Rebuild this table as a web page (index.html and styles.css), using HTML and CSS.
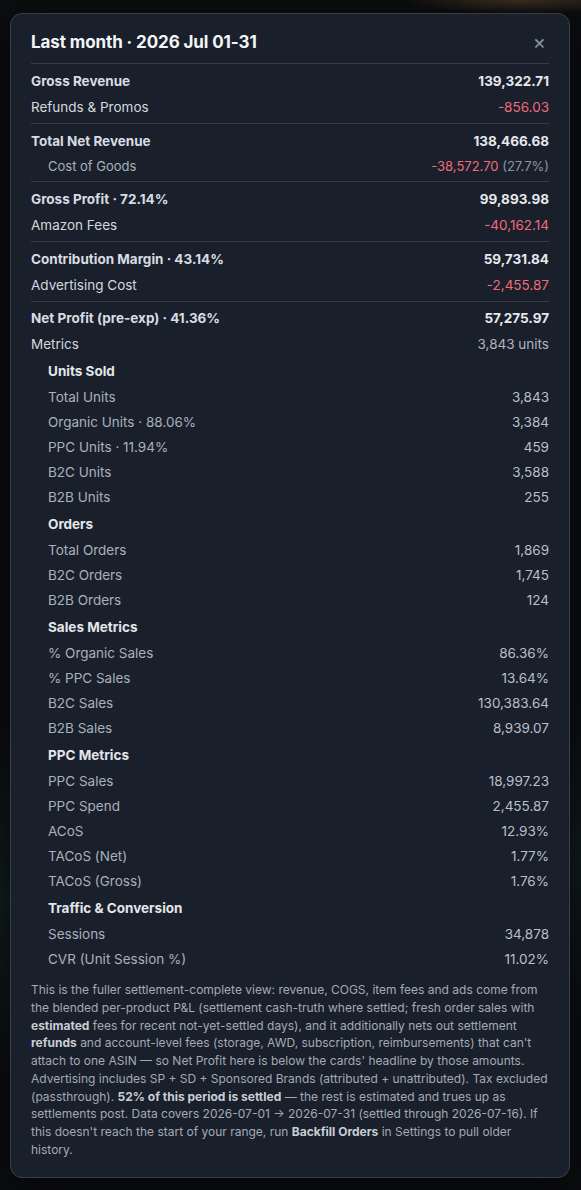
FILE: index.html
```html
<!DOCTYPE html>
<html lang="en">
<head>
    <meta charset="UTF-8">
    <meta name="viewport" content="width=device-width, initial-scale=1.0">
    <title>Period P&amp;L</title>
    <link rel="stylesheet" href="styles.css">
</head>
<body>
    <div class="modal">
        <div class="modal-head">
            <h2>Last month · 2026 Jul 01-31</h2>
            <span class="close-btn">&times;</span>
        </div>

        <div class="sect">
            <div class="row major"><span>Gross Revenue</span><span class="val">139,322.71</span></div>
            <div class="row"><span>Refunds &amp; Promos</span><span class="val neg">-856.03</span></div>
        </div>
        <div class="sect">
            <div class="row major"><span>Total Net Revenue</span><span class="val">138,466.68</span></div>
            <div class="row sub small"><span>Cost of Goods</span><span class="val"><span class="neg">-38,572.70</span> <span class="pct">(27.7%)</span></span></div>
        </div>
        <div class="sect">
            <div class="row major"><span>Gross Profit · 72.14%</span><span class="val">99,893.98</span></div>
            <div class="row"><span>Amazon Fees</span><span class="val neg">-40,162.14</span></div>
        </div>
        <div class="sect">
            <div class="row major"><span>Contribution Margin · 43.14%</span><span class="val">59,731.84</span></div>
            <div class="row"><span>Advertising Cost</span><span class="val neg">-2,455.87</span></div>
        </div>
        <div class="sect last">
            <div class="row major"><span>Net Profit (pre-exp) · 41.36%</span><span class="val">57,275.97</span></div>
            <div class="row"><span>Metrics</span><span class="val muted">3,843 units</span></div>

            <div class="metrics">
                <div class="group-title">Units Sold</div>
                <div class="row sub"><span>Total Units</span><span class="val">3,843</span></div>
                <div class="row sub"><span>Organic Units · 88.06%</span><span class="val">3,384</span></div>
                <div class="row sub"><span>PPC Units · 11.94%</span><span class="val">459</span></div>
                <div class="row sub"><span>B2C Units</span><span class="val">3,588</span></div>
                <div class="row sub"><span>B2B Units</span><span class="val">255</span></div>

                <div class="group-title">Orders</div>
                <div class="row sub"><span>Total Orders</span><span class="val">1,869</span></div>
                <div class="row sub"><span>B2C Orders</span><span class="val">1,745</span></div>
                <div class="row sub"><span>B2B Orders</span><span class="val">124</span></div>

                <div class="group-title">Sales Metrics</div>
                <div class="row sub"><span>% Organic Sales</span><span class="val">86.36%</span></div>
                <div class="row sub"><span>% PPC Sales</span><span class="val">13.64%</span></div>
                <div class="row sub"><span>B2C Sales</span><span class="val">130,383.64</span></div>
                <div class="row sub"><span>B2B Sales</span><span class="val">8,939.07</span></div>

                <div class="group-title">PPC Metrics</div>
                <div class="row sub"><span>PPC Sales</span><span class="val">18,997.23</span></div>
                <div class="row sub"><span>PPC Spend</span><span class="val">2,455.87</span></div>
                <div class="row sub"><span>ACoS</span><span class="val">12.93%</span></div>
                <div class="row sub"><span>TACoS (Net)</span><span class="val">1.77%</span></div>
                <div class="row sub"><span>TACoS (Gross)</span><span class="val">1.76%</span></div>

                <div class="group-title">Traffic &amp; Conversion</div>
                <div class="row sub"><span>Sessions</span><span class="val">34,878</span></div>
                <div class="row sub"><span>CVR (Unit Session %)</span><span class="val">11.02%</span></div>
            </div>
        </div>

        <p class="note">This is the fuller settlement-complete view: revenue, COGS, item fees and ads come from the blended per-product P&amp;L (settlement cash-truth where settled; fresh order sales with <b>estimated</b> fees for recent not-yet-settled days), and it additionally nets out settlement <b>refunds</b> and account-level fees (storage, AWD, subscription, reimbursements) that can't attach to one ASIN — so Net Profit here is below the cards' headline by those amounts. Advertising includes SP + SD + Sponsored Brands (attributed + unattributed). Tax excluded (passthrough). <b>52% of this period is settled</b> — the rest is estimated and trues up as settlements post. Data covers 2026-07-01 → 2026-07-31 (settled through 2026-07-16). If this doesn't reach the start of your range, run <b>Backfill Orders</b> in Settings to pull older history.</p>
    </div>
</body>
</html>
```

FILE: styles.css
```css
* {
    margin: 0;
    padding: 0;
    box-sizing: border-box;
}
body {
    font-family: Inter, "Noto Sans", sans-serif;
    background-color: #0c0d0f;
    background-image:
        radial-gradient(ellipse 120px 14px at 520px 0, rgba(120, 90, 50, 0.45), transparent),
        radial-gradient(ellipse 200px 180px at 0 900px, rgba(20, 60, 55, 0.35), transparent),
        radial-gradient(ellipse 160px 160px at 581px 860px, rgba(20, 60, 55, 0.3), transparent);
    min-height: 1190px;
    padding: 13px 10px;
    color: #d4d8de;
}
.modal {
    width: 560px;
    background: #19202b;
    border: 1px solid #3a3f47;
    border-radius: 12px;
    padding: 17px 20px 18px;
    box-shadow: 0 10px 40px rgba(0, 0, 0, 0.6);
}
.modal-head {
    display: flex;
    justify-content: space-between;
    align-items: center;
    padding-bottom: 10px;
}
.modal-head h2 {
    font-size: 17px;
    line-height: 22px;
    font-weight: 700;
    color: #f4f5f7;
    letter-spacing: -0.1px;
}
.close-btn {
    font-size: 20px;
    line-height: 20px;
    color: #8b95a3;
    margin-right: 3px;
    cursor: pointer;
}
.sect {
    border-top: 1px solid #343b47;
    padding: 4px 0 3px;
}
.sect.last {
    padding: 3px 0 0;
}
.row {
    display: flex;
    justify-content: space-between;
    align-items: center;
    height: 26px;
    font-size: 13.5px;
    color: #d4d8de;
}
.row.major {
    font-weight: 700;
    color: #d8dce2;
}
.row.major .val {
    color: #e6e8ec;
}
.val {
    color: #d4d8de;
}
.neg,
.val.neg {
    color: #ef6b7c;
}
.muted {
    color: #aeb4be;
}
.pct {
    color: #8c94a1;
}
.row.sub {
    padding-left: 17px;
    height: 25px;
    color: #a9b0bb;
}
.row.sub .val {
    color: #b9bfc8;
}
.row.small {
    height: 24px;
    font-size: 13px;
}
.group-title {
    padding-left: 17px;
    margin-top: 3px;
    height: 25px;
    line-height: 25px;
    font-size: 13.5px;
    font-weight: 700;
    color: #e3e6ea;
}
.metrics .group-title:first-child {
    margin-top: 2px;
}
.note {
    margin-top: 10px;
    font-size: 12px;
    line-height: 17.75px;
    color: #a3aab5;
}
.note b {
    color: #c9ced6;
    font-weight: 700;
}
```
